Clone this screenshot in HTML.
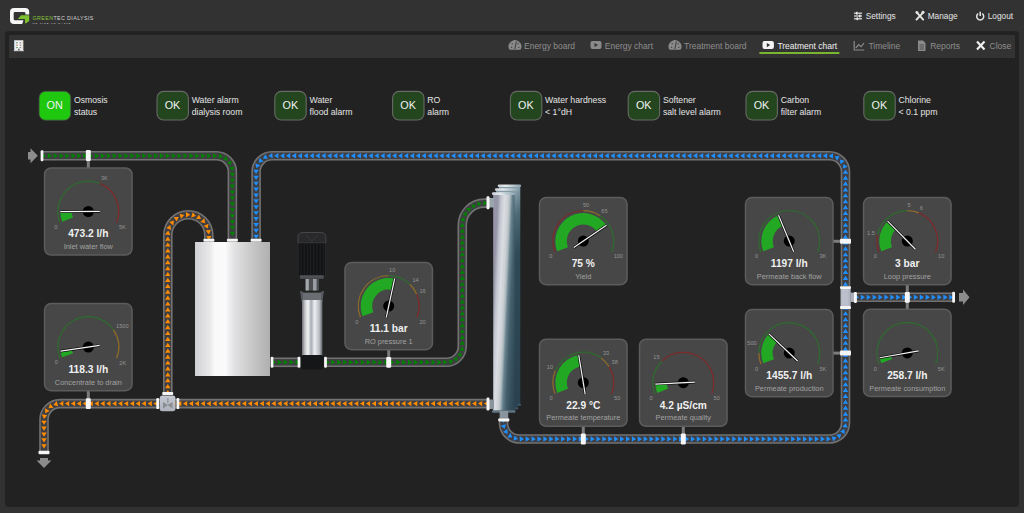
<!DOCTYPE html>
<html><head><meta charset="utf-8"><title>Treatment chart</title>
<style>
*{margin:0;padding:0}
html,body{width:1024px;height:513px;overflow:hidden;background:#323232}
svg{position:absolute;left:0;top:0;display:block}
</style></head><body>
<svg width="1024" height="513" viewBox="0 0 1024 513" font-family='"Liberation Sans", sans-serif'>

<path d="M14,8 H25.2 Q29.2,8 29.2,12 V14.5 H25.4 V13.2 Q25.4,12 24.2,12 H14.9 Q13.7,12 13.7,13.2 V19 Q13.7,20.2 14.9,20.2 H23.5 L22.2,24.1 H14 Q10,24.1 10,20.1 V12 Q10,8 14,8 Z" fill="#f6f6f6"/>
<polygon points="17.9,19 21,15.2 29.2,15.2 29.2,21 25.2,23.8 24.8,19" fill="#7cc12e"/>
<text x="32.6" y="19.7" font-size="5.3" letter-spacing="0.4" fill="#d4d4d4"><tspan fill="#86c23a">GREEN</tspan>TEC DIALYSIS</text>
<text x="32.6" y="24.4" font-size="2.5" letter-spacing="0.92" fill="#d6d6d6">NO TIME TO WASTE</text>
<g fill="#e6e6e6"><rect x="854" y="12.6" width="8" height="1.2"/><rect x="854" y="15.4" width="8" height="1.2"/><rect x="854" y="18.2" width="8" height="1.2"/>
<rect x="856" y="11.8" width="1.6" height="2.8"/><rect x="859" y="14.6" width="1.6" height="2.8"/><rect x="856.5" y="17.4" width="1.6" height="2.8"/></g>
<g stroke="#e6e6e6" stroke-width="1.9" stroke-linecap="round"><line x1="916.5" y1="12.2" x2="923.2" y2="19.6"/><line x1="923.5" y1="12.2" x2="916.5" y2="19.6"/></g>
<g fill="#e6e6e6"><circle cx="917" cy="12.6" r="1.4"/><rect x="921.6" y="11" width="2.6" height="2.6" transform="rotate(45 922.9 12.3)"/></g>
<path d="M978.2,13.6 A3.5,3.5 0 1 0 982.2,13.6" fill="none" stroke="#e6e6e6" stroke-width="1.5"/><line x1="980.2" y1="11.8" x2="980.2" y2="16" stroke="#e6e6e6" stroke-width="1.5"/>
<text x="865.7" y="18.6" font-size="8.3" fill="#e4e4e4">Settings</text>
<text x="927.7" y="18.6" font-size="8.3" fill="#e4e4e4">Manage</text>
<text x="987.7" y="18.6" font-size="8.3" fill="#e4e4e4">Logout</text>

<rect x="5" y="31" width="1014" height="476" rx="4" fill="#222222"/>
<rect x="9" y="35" width="1006" height="23" fill="#333333"/>
<g><rect x="14.4" y="40.3" width="8.8" height="10.4" fill="#f4f4f4"/><rect x="14.4" y="40.3" width="0.9" height="10.4" fill="#c8dcf0"/><rect x="22.4" y="40.3" width="0.8" height="10.4" fill="#e8d8c8"/>
<rect x="13.8" y="50.3" width="10" height="0.9" fill="#d8d8d8"/>
<rect x="16.2" y="42.2" width="1.5" height="1.2" fill="#5e8a66"/><rect x="19.6" y="42.2" width="1.6" height="1.2" fill="#8a8a8a"/>
<rect x="16.2" y="44.6" width="1.5" height="1.2" fill="#b08060"/><rect x="19.6" y="44.6" width="1.6" height="1.2" fill="#8a8a8a"/>
<rect x="16.2" y="47" width="1.5" height="1.2" fill="#5e8a66"/><rect x="19.6" y="47" width="1.6" height="1.2" fill="#8a8a8a"/>
<rect x="18.1" y="48.8" width="1.6" height="1.6" fill="#606060"/></g>
<g fill="#8a8a8a">
<path d="M509.5,49.8 A6.4,6.4 0 1 1 520.5,49.8 Z"/><path d="M669.5,49.8 A6.4,6.4 0 1 1 680.5,49.8 Z"/>
<rect x="590.5" y="41" width="11" height="8" rx="2"/>
</g>
<g fill="#333"><polygon points="594.5,43 594.5,47 598,45"/></g>
<g fill="#444"><rect x="511.6" y="43.2" width="1.2" height="1.2"/><rect x="517.6" y="43.2" width="1.2" height="1.2"/><rect x="511" y="46.8" width="1.2" height="1.2"/><rect x="518.2" y="46.8" width="1.2" height="1.2"/>
<rect x="671.6" y="43.2" width="1.2" height="1.2"/><rect x="677.6" y="43.2" width="1.2" height="1.2"/><rect x="671" y="46.8" width="1.2" height="1.2"/><rect x="678.2" y="46.8" width="1.2" height="1.2"/></g>
<g stroke="#3a3a3a" stroke-width="1"><line x1="514.8" y1="49" x2="516.4" y2="41.5"/><line x1="674.8" y1="49" x2="676.4" y2="41.5"/></g>
<rect x="762.5" y="41.1" width="11.4" height="7.9" rx="2" fill="#f4f4f4"/><polygon points="766.8,43 766.8,47.2 770.2,45.1" fill="#333"/>
<g stroke="#8a8a8a" stroke-width="1.2" fill="none"><polyline points="854.2,41 854.2,50 864.2,50"/><polyline points="855.8,48 858.6,44.6 861,46.6 864,43.2"/></g>
<path d="M918,40.5 H923 L925.5,43 V51 H918 Z" fill="#8a8a8a"/><g stroke="#333" stroke-width="0.7"><line x1="919.5" y1="45" x2="924" y2="45"/><line x1="919.5" y1="47" x2="924" y2="47"/><line x1="919.5" y1="49" x2="924" y2="49"/></g>
<g stroke="#f2f2f2" stroke-width="2.1"><line x1="977" y1="41.6" x2="984.5" y2="49.4"/><line x1="984.5" y1="41.6" x2="977" y2="49.4"/></g>
<g font-size="8.5" fill="#8e8e8e">
<text x="524" y="48.6">Energy board</text>
<text x="604.8" y="48.6">Energy chart</text>
<text x="684" y="48.6">Treatment board</text>
<text x="777.4" y="48.6" fill="#f0f0f0">Treatment chart</text>
<text x="868.4" y="48.6">Timeline</text>
<text x="930.2" y="48.6">Reports</text>
<text x="989.6" y="48.6">Close</text>
</g>
<rect x="759.4" y="52" width="80" height="2" fill="#7ab52f"/>
<rect x="39.1" y="91.3" width="31.6" height="28.9" rx="6.5" fill="#1fc80f" stroke="#4a4f4a" stroke-width="0.8"/><text x="54.7" y="108.8" text-anchor="middle" font-size="10.8" fill="#f2f2f2">ON</text><text x="73.9" y="102.8" font-size="8.7" fill="#e4e4e4">Osmosis</text><text x="73.9" y="115" font-size="8.7" fill="#e4e4e4">status</text><rect x="157" y="91.4" width="31.4" height="28.6" rx="6.5" fill="#23461f" stroke="#676a64" stroke-width="1.1"/><text x="172.5" y="108.8" text-anchor="middle" font-size="10.8" fill="#f2f2f2">OK</text><text x="191.7" y="102.8" font-size="8.7" fill="#e4e4e4">Water alarm</text><text x="191.7" y="115" font-size="8.7" fill="#e4e4e4">dialysis room</text><rect x="274.8" y="91.4" width="31.4" height="28.6" rx="6.5" fill="#23461f" stroke="#676a64" stroke-width="1.1"/><text x="290.3" y="108.8" text-anchor="middle" font-size="10.8" fill="#f2f2f2">OK</text><text x="309.5" y="102.8" font-size="8.7" fill="#e4e4e4">Water</text><text x="309.5" y="115" font-size="8.7" fill="#e4e4e4">flood alarm</text><rect x="392.6" y="91.4" width="31.4" height="28.6" rx="6.5" fill="#23461f" stroke="#676a64" stroke-width="1.1"/><text x="408.1" y="108.8" text-anchor="middle" font-size="10.8" fill="#f2f2f2">OK</text><text x="427.3" y="102.8" font-size="8.7" fill="#e4e4e4">RO</text><text x="427.3" y="115" font-size="8.7" fill="#e4e4e4">alarm</text><rect x="510.4" y="91.4" width="31.4" height="28.6" rx="6.5" fill="#23461f" stroke="#676a64" stroke-width="1.1"/><text x="525.9" y="108.8" text-anchor="middle" font-size="10.8" fill="#f2f2f2">OK</text><text x="545.1" y="102.8" font-size="8.7" fill="#e4e4e4">Water hardness</text><text x="545.1" y="115" font-size="8.7" fill="#e4e4e4">&lt; 1°dH</text><rect x="628.2" y="91.4" width="31.4" height="28.6" rx="6.5" fill="#23461f" stroke="#676a64" stroke-width="1.1"/><text x="643.7" y="108.8" text-anchor="middle" font-size="10.8" fill="#f2f2f2">OK</text><text x="662.9" y="102.8" font-size="8.7" fill="#e4e4e4">Softener</text><text x="662.9" y="115" font-size="8.7" fill="#e4e4e4">salt level alarm</text><rect x="746" y="91.4" width="31.4" height="28.6" rx="6.5" fill="#23461f" stroke="#676a64" stroke-width="1.1"/><text x="761.5" y="108.8" text-anchor="middle" font-size="10.8" fill="#f2f2f2">OK</text><text x="780.7" y="102.8" font-size="8.7" fill="#e4e4e4">Carbon</text><text x="780.7" y="115" font-size="8.7" fill="#e4e4e4">filter alarm</text><rect x="863.8" y="91.4" width="31.4" height="28.6" rx="6.5" fill="#23461f" stroke="#676a64" stroke-width="1.1"/><text x="879.3" y="108.8" text-anchor="middle" font-size="10.8" fill="#f2f2f2">OK</text><text x="898.5" y="102.8" font-size="8.7" fill="#e4e4e4">Chlorine</text><text x="898.5" y="115" font-size="8.7" fill="#e4e4e4">&lt; 0.1 ppm</text><defs><linearGradient id="tg" x1="0" x2="1" y1="0" y2="0"><stop offset="0" stop-color="#cfd0d4"/><stop offset="0.2" stop-color="#e9e9ea"/><stop offset="0.26" stop-color="#f9f9f9"/><stop offset="0.4" stop-color="#fbfbfb"/><stop offset="0.46" stop-color="#eeeef0"/><stop offset="0.52" stop-color="#e2e2e4"/><stop offset="0.62" stop-color="#d7d7d7"/><stop offset="0.74" stop-color="#cacaca"/><stop offset="0.86" stop-color="#bdbdbd"/><stop offset="1" stop-color="#b0b0b0"/></linearGradient><linearGradient id="mg" gradientUnits="userSpaceOnUse" x1="493" y1="302" x2="520" y2="303.26"><stop offset="0" stop-color="#9696a8"/><stop offset="0.12" stop-color="#c4c6d0"/><stop offset="0.25" stop-color="#dadde2"/><stop offset="0.38" stop-color="#cbd0d4"/><stop offset="0.46" stop-color="#a9b6bc"/><stop offset="0.53" stop-color="#6a8590"/><stop offset="0.66" stop-color="#45606c"/><stop offset="0.82" stop-color="#34505c"/><stop offset="1" stop-color="#2c4250"/></linearGradient><linearGradient id="mgb" x1="0" x2="0" y1="0" y2="1"><stop offset="0" stop-color="#8aa2ac"/><stop offset="0.12" stop-color="#4e6a76"/><stop offset="0.3" stop-color="#304a58"/><stop offset="1" stop-color="#2a4150"/></linearGradient><linearGradient id="fg" x1="0" x2="1" y1="0" y2="0"><stop offset="0" stop-color="#c8ced4"/><stop offset="0.35" stop-color="#e6eaec"/><stop offset="0.7" stop-color="#b4c4cc"/><stop offset="1" stop-color="#8aa2ae"/></linearGradient><linearGradient id="pg" x1="0" x2="1" y1="0" y2="0"><stop offset="0" stop-color="#6f7176"/><stop offset="0.15" stop-color="#c8cacd"/><stop offset="0.3" stop-color="#f2f3f4"/><stop offset="0.45" stop-color="#a9aeb4"/><stop offset="0.62" stop-color="#eef0f2"/><stop offset="0.85" stop-color="#b8bbbf"/><stop offset="1" stop-color="#606368"/></linearGradient><linearGradient id="vg" x1="0" x2="0" y1="0" y2="1"><stop offset="0" stop-color="#c4c8d2"/><stop offset="1" stop-color="#aeb2bc"/></linearGradient></defs><line x1="88.3" y1="156" x2="88.3" y2="168" stroke="#7c7c7c" stroke-width="3"/><line x1="88.3" y1="390" x2="88.3" y2="404" stroke="#7c7c7c" stroke-width="3"/><line x1="388.7" y1="349" x2="388.7" y2="362" stroke="#7c7c7c" stroke-width="3"/><line x1="583.3" y1="425" x2="583.3" y2="439" stroke="#7c7c7c" stroke-width="3"/><line x1="683.3" y1="425" x2="683.3" y2="439" stroke="#7c7c7c" stroke-width="3"/><line x1="833" y1="241.3" x2="846" y2="241.3" stroke="#7c7c7c" stroke-width="3"/><line x1="833" y1="353.1" x2="846" y2="353.1" stroke="#7c7c7c" stroke-width="3"/><line x1="907.3" y1="284" x2="907.3" y2="310" stroke="#7c7c7c" stroke-width="3"/><path d="M42,155.8 H216.4 A16,16 0 0 1 232.4,171.8 V240" fill="none" stroke="#727272" stroke-width="9.6"/><path d="M42,155.8 H216.4 A16,16 0 0 1 232.4,171.8 V240" fill="none" stroke="#3f3e42" stroke-width="6.4"/><g fill="#008000"><polygon points="46.1,155.8 41.9,153.1 41.9,158.5"/><polygon points="52,155.8 47.8,153.1 47.8,158.5"/><polygon points="57.9,155.8 53.7,153.1 53.7,158.5"/><polygon points="63.8,155.8 59.6,153.1 59.6,158.5"/><polygon points="69.7,155.8 65.5,153.1 65.5,158.5"/><polygon points="75.6,155.8 71.4,153.1 71.4,158.5"/><polygon points="81.5,155.8 77.3,153.1 77.3,158.5"/><polygon points="87.4,155.8 83.2,153.1 83.2,158.5"/><polygon points="93.3,155.8 89.1,153.1 89.1,158.5"/><polygon points="99.2,155.8 95,153.1 95,158.5"/><polygon points="105.1,155.8 100.9,153.1 100.9,158.5"/><polygon points="111,155.8 106.8,153.1 106.8,158.5"/><polygon points="116.9,155.8 112.7,153.1 112.7,158.5"/><polygon points="122.8,155.8 118.6,153.1 118.6,158.5"/><polygon points="128.7,155.8 124.5,153.1 124.5,158.5"/><polygon points="134.6,155.8 130.4,153.1 130.4,158.5"/><polygon points="140.5,155.8 136.3,153.1 136.3,158.5"/><polygon points="146.4,155.8 142.2,153.1 142.2,158.5"/><polygon points="152.3,155.8 148.1,153.1 148.1,158.5"/><polygon points="158.2,155.8 154,153.1 154,158.5"/><polygon points="164.1,155.8 159.9,153.1 159.9,158.5"/><polygon points="170,155.8 165.8,153.1 165.8,158.5"/><polygon points="175.9,155.8 171.7,153.1 171.7,158.5"/><polygon points="181.8,155.8 177.6,153.1 177.6,158.5"/><polygon points="187.7,155.8 183.5,153.1 183.5,158.5"/><polygon points="193.6,155.8 189.4,153.1 189.4,158.5"/><polygon points="199.5,155.8 195.3,153.1 195.3,158.5"/><polygon points="205.4,155.8 201.2,153.1 201.2,158.5"/><polygon points="211.3,155.8 207.1,153.1 207.1,158.5"/><polygon points="217.2,155.8 213,153.1 213,158.5"/><polygon points="222.95,157.05 219.69,153.27 218.16,158.45"/><polygon points="227.83,160.4 226.15,155.7 222.85,159.98"/><polygon points="231.17,165.29 231.29,160.3 226.68,163.1"/><polygon points="232.52,171.05 234.44,166.44 229.12,167.39"/><polygon points="232.4,176.97 235.1,172.77 229.7,172.77"/><polygon points="232.4,182.87 235.1,178.67 229.7,178.67"/><polygon points="232.4,188.77 235.1,184.57 229.7,184.57"/><polygon points="232.4,194.67 235.1,190.47 229.7,190.47"/><polygon points="232.4,200.57 235.1,196.37 229.7,196.37"/><polygon points="232.4,206.47 235.1,202.27 229.7,202.27"/><polygon points="232.4,212.37 235.1,208.17 229.7,208.17"/><polygon points="232.4,218.27 235.1,214.07 229.7,214.07"/><polygon points="232.4,224.17 235.1,219.97 229.7,219.97"/><polygon points="232.4,230.07 235.1,225.87 229.7,225.87"/><polygon points="232.4,235.97 235.1,231.77 229.7,231.77"/></g><path d="M503.5,419 V423 A16,16 0 0 0 519.5,439 H829.5 A16,16 0 0 0 845.5,423 V171.8 A16,16 0 0 0 829.5,155.8 H272.1 A16,16 0 0 0 256.1,171.8 V240" fill="none" stroke="#727272" stroke-width="9.6"/><path d="M503.5,419 V423 A16,16 0 0 0 519.5,439 H829.5 A16,16 0 0 0 845.5,423 V171.8 A16,16 0 0 0 829.5,155.8 H272.1 A16,16 0 0 0 256.1,171.8 V240" fill="none" stroke="#3f3e42" stroke-width="6.4"/><g fill="#1e90ff"><polygon points="503.5,423.1 506.2,418.9 500.8,418.9"/><polygon points="504.48,428.9 506.09,424.17 500.85,425.48"/><polygon points="507.62,433.92 507.41,428.93 502.99,432.03"/><polygon points="512.35,437.47 510.36,432.89 507.36,437.38"/><polygon points="518.04,439.07 514.54,435.52 513.36,440.79"/><polygon points="523.97,439 519.77,436.3 519.77,441.7"/><polygon points="529.87,439 525.67,436.3 525.67,441.7"/><polygon points="535.77,439 531.57,436.3 531.57,441.7"/><polygon points="541.67,439 537.47,436.3 537.47,441.7"/><polygon points="547.57,439 543.37,436.3 543.37,441.7"/><polygon points="553.47,439 549.27,436.3 549.27,441.7"/><polygon points="559.37,439 555.17,436.3 555.17,441.7"/><polygon points="565.27,439 561.07,436.3 561.07,441.7"/><polygon points="571.17,439 566.97,436.3 566.97,441.7"/><polygon points="577.07,439 572.87,436.3 572.87,441.7"/><polygon points="582.97,439 578.77,436.3 578.77,441.7"/><polygon points="588.87,439 584.67,436.3 584.67,441.7"/><polygon points="594.77,439 590.57,436.3 590.57,441.7"/><polygon points="600.67,439 596.47,436.3 596.47,441.7"/><polygon points="606.57,439 602.37,436.3 602.37,441.7"/><polygon points="612.47,439 608.27,436.3 608.27,441.7"/><polygon points="618.37,439 614.17,436.3 614.17,441.7"/><polygon points="624.27,439 620.07,436.3 620.07,441.7"/><polygon points="630.17,439 625.97,436.3 625.97,441.7"/><polygon points="636.07,439 631.87,436.3 631.87,441.7"/><polygon points="641.97,439 637.77,436.3 637.77,441.7"/><polygon points="647.87,439 643.67,436.3 643.67,441.7"/><polygon points="653.77,439 649.57,436.3 649.57,441.7"/><polygon points="659.67,439 655.47,436.3 655.47,441.7"/><polygon points="665.57,439 661.37,436.3 661.37,441.7"/><polygon points="671.47,439 667.27,436.3 667.27,441.7"/><polygon points="677.37,439 673.17,436.3 673.17,441.7"/><polygon points="683.27,439 679.07,436.3 679.07,441.7"/><polygon points="689.17,439 684.97,436.3 684.97,441.7"/><polygon points="695.07,439 690.87,436.3 690.87,441.7"/><polygon points="700.97,439 696.77,436.3 696.77,441.7"/><polygon points="706.87,439 702.67,436.3 702.67,441.7"/><polygon points="712.77,439 708.57,436.3 708.57,441.7"/><polygon points="718.67,439 714.47,436.3 714.47,441.7"/><polygon points="724.57,439 720.37,436.3 720.37,441.7"/><polygon points="730.47,439 726.27,436.3 726.27,441.7"/><polygon points="736.37,439 732.17,436.3 732.17,441.7"/><polygon points="742.27,439 738.07,436.3 738.07,441.7"/><polygon points="748.17,439 743.97,436.3 743.97,441.7"/><polygon points="754.07,439 749.87,436.3 749.87,441.7"/><polygon points="759.97,439 755.77,436.3 755.77,441.7"/><polygon points="765.87,439 761.67,436.3 761.67,441.7"/><polygon points="771.77,439 767.57,436.3 767.57,441.7"/><polygon points="777.67,439 773.47,436.3 773.47,441.7"/><polygon points="783.57,439 779.37,436.3 779.37,441.7"/><polygon points="789.47,439 785.27,436.3 785.27,441.7"/><polygon points="795.37,439 791.17,436.3 791.17,441.7"/><polygon points="801.27,439 797.07,436.3 797.07,441.7"/><polygon points="807.17,439 802.97,436.3 802.97,441.7"/><polygon points="813.07,439 808.87,436.3 808.87,441.7"/><polygon points="818.97,439 814.77,436.3 814.77,441.7"/><polygon points="824.87,439 820.67,436.3 820.67,441.7"/><polygon points="830.77,439 826.57,436.3 826.57,441.7"/><polygon points="836.48,437.55 831.65,436.29 833.33,441.42"/><polygon points="841.25,434.06 836.29,434.63 839.71,438.81"/><polygon points="844.45,429.08 840.03,431.4 844.72,434.06"/><polygon points="845.63,423.28 842.35,427.04 847.69,427.83"/><polygon points="845.5,417.37 842.8,421.57 848.2,421.57"/><polygon points="845.5,411.47 842.8,415.67 848.2,415.67"/><polygon points="845.5,405.57 842.8,409.77 848.2,409.77"/><polygon points="845.5,399.67 842.8,403.87 848.2,403.87"/><polygon points="845.5,393.77 842.8,397.97 848.2,397.97"/><polygon points="845.5,387.87 842.8,392.07 848.2,392.07"/><polygon points="845.5,381.97 842.8,386.17 848.2,386.17"/><polygon points="845.5,376.07 842.8,380.27 848.2,380.27"/><polygon points="845.5,370.17 842.8,374.37 848.2,374.37"/><polygon points="845.5,364.27 842.8,368.47 848.2,368.47"/><polygon points="845.5,358.37 842.8,362.57 848.2,362.57"/><polygon points="845.5,352.47 842.8,356.67 848.2,356.67"/><polygon points="845.5,346.57 842.8,350.77 848.2,350.77"/><polygon points="845.5,340.67 842.8,344.87 848.2,344.87"/><polygon points="845.5,334.77 842.8,338.97 848.2,338.97"/><polygon points="845.5,328.87 842.8,333.07 848.2,333.07"/><polygon points="845.5,322.97 842.8,327.17 848.2,327.17"/><polygon points="845.5,317.07 842.8,321.27 848.2,321.27"/><polygon points="845.5,311.17 842.8,315.37 848.2,315.37"/><polygon points="845.5,305.27 842.8,309.47 848.2,309.47"/><polygon points="845.5,299.37 842.8,303.57 848.2,303.57"/><polygon points="845.5,293.47 842.8,297.67 848.2,297.67"/><polygon points="845.5,287.57 842.8,291.77 848.2,291.77"/><polygon points="845.5,281.67 842.8,285.87 848.2,285.87"/><polygon points="845.5,275.77 842.8,279.97 848.2,279.97"/><polygon points="845.5,269.87 842.8,274.07 848.2,274.07"/><polygon points="845.5,263.97 842.8,268.17 848.2,268.17"/><polygon points="845.5,258.07 842.8,262.27 848.2,262.27"/><polygon points="845.5,252.17 842.8,256.37 848.2,256.37"/><polygon points="845.5,246.27 842.8,250.47 848.2,250.47"/><polygon points="845.5,240.37 842.8,244.57 848.2,244.57"/><polygon points="845.5,234.47 842.8,238.67 848.2,238.67"/><polygon points="845.5,228.57 842.8,232.77 848.2,232.77"/><polygon points="845.5,222.67 842.8,226.87 848.2,226.87"/><polygon points="845.5,216.77 842.8,220.97 848.2,220.97"/><polygon points="845.5,210.87 842.8,215.07 848.2,215.07"/><polygon points="845.5,204.97 842.8,209.17 848.2,209.17"/><polygon points="845.5,199.07 842.8,203.27 848.2,203.27"/><polygon points="845.5,193.17 842.8,197.37 848.2,197.37"/><polygon points="845.5,187.27 842.8,191.47 848.2,191.47"/><polygon points="845.5,181.37 842.8,185.57 848.2,185.57"/><polygon points="845.5,175.47 842.8,179.67 848.2,179.67"/><polygon points="845.48,169.57 842.82,173.79 848.22,173.74"/><polygon points="843.6,163.96 842.64,168.85 847.66,166.87"/><polygon points="839.83,159.4 840.69,164.32 844.66,160.65"/><polygon points="834.66,156.51 837.24,160.78 839.62,155.94"/><polygon points="828.8,155.68 832.75,158.73 833.22,153.35"/><polygon points="822.9,155.8 827.1,158.5 827.1,153.1"/><polygon points="817,155.8 821.2,158.5 821.2,153.1"/><polygon points="811.1,155.8 815.3,158.5 815.3,153.1"/><polygon points="805.2,155.8 809.4,158.5 809.4,153.1"/><polygon points="799.3,155.8 803.5,158.5 803.5,153.1"/><polygon points="793.4,155.8 797.6,158.5 797.6,153.1"/><polygon points="787.5,155.8 791.7,158.5 791.7,153.1"/><polygon points="781.6,155.8 785.8,158.5 785.8,153.1"/><polygon points="775.7,155.8 779.9,158.5 779.9,153.1"/><polygon points="769.8,155.8 774,158.5 774,153.1"/><polygon points="763.9,155.8 768.1,158.5 768.1,153.1"/><polygon points="758,155.8 762.2,158.5 762.2,153.1"/><polygon points="752.1,155.8 756.3,158.5 756.3,153.1"/><polygon points="746.2,155.8 750.4,158.5 750.4,153.1"/><polygon points="740.3,155.8 744.5,158.5 744.5,153.1"/><polygon points="734.4,155.8 738.6,158.5 738.6,153.1"/><polygon points="728.5,155.8 732.7,158.5 732.7,153.1"/><polygon points="722.6,155.8 726.8,158.5 726.8,153.1"/><polygon points="716.7,155.8 720.9,158.5 720.9,153.1"/><polygon points="710.8,155.8 715,158.5 715,153.1"/><polygon points="704.9,155.8 709.1,158.5 709.1,153.1"/><polygon points="699,155.8 703.2,158.5 703.2,153.1"/><polygon points="693.1,155.8 697.3,158.5 697.3,153.1"/><polygon points="687.2,155.8 691.4,158.5 691.4,153.1"/><polygon points="681.3,155.8 685.5,158.5 685.5,153.1"/><polygon points="675.4,155.8 679.6,158.5 679.6,153.1"/><polygon points="669.5,155.8 673.7,158.5 673.7,153.1"/><polygon points="663.6,155.8 667.8,158.5 667.8,153.1"/><polygon points="657.7,155.8 661.9,158.5 661.9,153.1"/><polygon points="651.8,155.8 656,158.5 656,153.1"/><polygon points="645.9,155.8 650.1,158.5 650.1,153.1"/><polygon points="640,155.8 644.2,158.5 644.2,153.1"/><polygon points="634.1,155.8 638.3,158.5 638.3,153.1"/><polygon points="628.2,155.8 632.4,158.5 632.4,153.1"/><polygon points="622.3,155.8 626.5,158.5 626.5,153.1"/><polygon points="616.4,155.8 620.6,158.5 620.6,153.1"/><polygon points="610.5,155.8 614.7,158.5 614.7,153.1"/><polygon points="604.6,155.8 608.8,158.5 608.8,153.1"/><polygon points="598.7,155.8 602.9,158.5 602.9,153.1"/><polygon points="592.8,155.8 597,158.5 597,153.1"/><polygon points="586.9,155.8 591.1,158.5 591.1,153.1"/><polygon points="581,155.8 585.2,158.5 585.2,153.1"/><polygon points="575.1,155.8 579.3,158.5 579.3,153.1"/><polygon points="569.2,155.8 573.4,158.5 573.4,153.1"/><polygon points="563.3,155.8 567.5,158.5 567.5,153.1"/><polygon points="557.4,155.8 561.6,158.5 561.6,153.1"/><polygon points="551.5,155.8 555.7,158.5 555.7,153.1"/><polygon points="545.6,155.8 549.8,158.5 549.8,153.1"/><polygon points="539.7,155.8 543.9,158.5 543.9,153.1"/><polygon points="533.8,155.8 538,158.5 538,153.1"/><polygon points="527.9,155.8 532.1,158.5 532.1,153.1"/><polygon points="522,155.8 526.2,158.5 526.2,153.1"/><polygon points="516.1,155.8 520.3,158.5 520.3,153.1"/><polygon points="510.2,155.8 514.4,158.5 514.4,153.1"/><polygon points="504.3,155.8 508.5,158.5 508.5,153.1"/><polygon points="498.4,155.8 502.6,158.5 502.6,153.1"/><polygon points="492.5,155.8 496.7,158.5 496.7,153.1"/><polygon points="486.6,155.8 490.8,158.5 490.8,153.1"/><polygon points="480.7,155.8 484.9,158.5 484.9,153.1"/><polygon points="474.8,155.8 479,158.5 479,153.1"/><polygon points="468.9,155.8 473.1,158.5 473.1,153.1"/><polygon points="463,155.8 467.2,158.5 467.2,153.1"/><polygon points="457.1,155.8 461.3,158.5 461.3,153.1"/><polygon points="451.2,155.8 455.4,158.5 455.4,153.1"/><polygon points="445.3,155.8 449.5,158.5 449.5,153.1"/><polygon points="439.4,155.8 443.6,158.5 443.6,153.1"/><polygon points="433.5,155.8 437.7,158.5 437.7,153.1"/><polygon points="427.6,155.8 431.8,158.5 431.8,153.1"/><polygon points="421.7,155.8 425.9,158.5 425.9,153.1"/><polygon points="415.8,155.8 420,158.5 420,153.1"/><polygon points="409.9,155.8 414.1,158.5 414.1,153.1"/><polygon points="404,155.8 408.2,158.5 408.2,153.1"/><polygon points="398.1,155.8 402.3,158.5 402.3,153.1"/><polygon points="392.2,155.8 396.4,158.5 396.4,153.1"/><polygon points="386.3,155.8 390.5,158.5 390.5,153.1"/><polygon points="380.4,155.8 384.6,158.5 384.6,153.1"/><polygon points="374.5,155.8 378.7,158.5 378.7,153.1"/><polygon points="368.6,155.8 372.8,158.5 372.8,153.1"/><polygon points="362.7,155.8 366.9,158.5 366.9,153.1"/><polygon points="356.8,155.8 361,158.5 361,153.1"/><polygon points="350.9,155.8 355.1,158.5 355.1,153.1"/><polygon points="345,155.8 349.2,158.5 349.2,153.1"/><polygon points="339.1,155.8 343.3,158.5 343.3,153.1"/><polygon points="333.2,155.8 337.4,158.5 337.4,153.1"/><polygon points="327.3,155.8 331.5,158.5 331.5,153.1"/><polygon points="321.4,155.8 325.6,158.5 325.6,153.1"/><polygon points="315.5,155.8 319.7,158.5 319.7,153.1"/><polygon points="309.6,155.8 313.8,158.5 313.8,153.1"/><polygon points="303.7,155.8 307.9,158.5 307.9,153.1"/><polygon points="297.8,155.8 302,158.5 302,153.1"/><polygon points="291.9,155.8 296.1,158.5 296.1,153.1"/><polygon points="286,155.8 290.2,158.5 290.2,153.1"/><polygon points="280.1,155.8 284.3,158.5 284.3,153.1"/><polygon points="274.2,155.8 278.4,158.5 278.4,153.1"/><polygon points="268.31,156.11 272.78,158.35 272.2,152.98"/><polygon points="262.91,158.53 267.88,159.01 265.41,154.21"/><polygon points="258.75,162.74 263.56,161.39 259.52,157.8"/><polygon points="256.38,168.16 260.38,165.17 255.32,163.28"/><polygon points="256.1,174.07 258.8,169.87 253.4,169.87"/><polygon points="256.1,179.97 258.8,175.77 253.4,175.77"/><polygon points="256.1,185.87 258.8,181.67 253.4,181.67"/><polygon points="256.1,191.77 258.8,187.57 253.4,187.57"/><polygon points="256.1,197.67 258.8,193.47 253.4,193.47"/><polygon points="256.1,203.57 258.8,199.37 253.4,199.37"/><polygon points="256.1,209.47 258.8,205.27 253.4,205.27"/><polygon points="256.1,215.37 258.8,211.17 253.4,211.17"/><polygon points="256.1,221.27 258.8,217.07 253.4,217.07"/><polygon points="256.1,227.17 258.8,222.97 253.4,222.97"/><polygon points="256.1,233.07 258.8,228.87 253.4,228.87"/><polygon points="256.1,238.97 258.8,234.77 253.4,234.77"/></g><path d="M855,297.3 H953.6" fill="none" stroke="#727272" stroke-width="9.6"/><path d="M855,297.3 H953.6" fill="none" stroke="#3f3e42" stroke-width="6.4"/><g fill="#1e90ff"><polygon points="859.1,297.3 854.9,294.6 854.9,300"/><polygon points="865,297.3 860.8,294.6 860.8,300"/><polygon points="870.9,297.3 866.7,294.6 866.7,300"/><polygon points="876.8,297.3 872.6,294.6 872.6,300"/><polygon points="882.7,297.3 878.5,294.6 878.5,300"/><polygon points="888.6,297.3 884.4,294.6 884.4,300"/><polygon points="894.5,297.3 890.3,294.6 890.3,300"/><polygon points="900.4,297.3 896.2,294.6 896.2,300"/><polygon points="906.3,297.3 902.1,294.6 902.1,300"/><polygon points="912.2,297.3 908,294.6 908,300"/><polygon points="918.1,297.3 913.9,294.6 913.9,300"/><polygon points="924,297.3 919.8,294.6 919.8,300"/><polygon points="929.9,297.3 925.7,294.6 925.7,300"/><polygon points="935.8,297.3 931.6,294.6 931.6,300"/><polygon points="941.7,297.3 937.5,294.6 937.5,300"/><polygon points="947.6,297.3 943.4,294.6 943.4,300"/><polygon points="953.5,297.3 949.3,294.6 949.3,300"/></g><path d="M488,403.6 H60 A16,16 0 0 0 44,419.6 V452.5" fill="none" stroke="#727272" stroke-width="9.6"/><path d="M488,403.6 H60 A16,16 0 0 0 44,419.6 V452.5" fill="none" stroke="#3f3e42" stroke-width="6.4"/><g fill="#ff8c00"><polygon points="483.9,403.6 488.1,406.3 488.1,400.9"/><polygon points="478,403.6 482.2,406.3 482.2,400.9"/><polygon points="472.1,403.6 476.3,406.3 476.3,400.9"/><polygon points="466.2,403.6 470.4,406.3 470.4,400.9"/><polygon points="460.3,403.6 464.5,406.3 464.5,400.9"/><polygon points="454.4,403.6 458.6,406.3 458.6,400.9"/><polygon points="448.5,403.6 452.7,406.3 452.7,400.9"/><polygon points="442.6,403.6 446.8,406.3 446.8,400.9"/><polygon points="436.7,403.6 440.9,406.3 440.9,400.9"/><polygon points="430.8,403.6 435,406.3 435,400.9"/><polygon points="424.9,403.6 429.1,406.3 429.1,400.9"/><polygon points="419,403.6 423.2,406.3 423.2,400.9"/><polygon points="413.1,403.6 417.3,406.3 417.3,400.9"/><polygon points="407.2,403.6 411.4,406.3 411.4,400.9"/><polygon points="401.3,403.6 405.5,406.3 405.5,400.9"/><polygon points="395.4,403.6 399.6,406.3 399.6,400.9"/><polygon points="389.5,403.6 393.7,406.3 393.7,400.9"/><polygon points="383.6,403.6 387.8,406.3 387.8,400.9"/><polygon points="377.7,403.6 381.9,406.3 381.9,400.9"/><polygon points="371.8,403.6 376,406.3 376,400.9"/><polygon points="365.9,403.6 370.1,406.3 370.1,400.9"/><polygon points="360,403.6 364.2,406.3 364.2,400.9"/><polygon points="354.1,403.6 358.3,406.3 358.3,400.9"/><polygon points="348.2,403.6 352.4,406.3 352.4,400.9"/><polygon points="342.3,403.6 346.5,406.3 346.5,400.9"/><polygon points="336.4,403.6 340.6,406.3 340.6,400.9"/><polygon points="330.5,403.6 334.7,406.3 334.7,400.9"/><polygon points="324.6,403.6 328.8,406.3 328.8,400.9"/><polygon points="318.7,403.6 322.9,406.3 322.9,400.9"/><polygon points="312.8,403.6 317,406.3 317,400.9"/><polygon points="306.9,403.6 311.1,406.3 311.1,400.9"/><polygon points="301,403.6 305.2,406.3 305.2,400.9"/><polygon points="295.1,403.6 299.3,406.3 299.3,400.9"/><polygon points="289.2,403.6 293.4,406.3 293.4,400.9"/><polygon points="283.3,403.6 287.5,406.3 287.5,400.9"/><polygon points="277.4,403.6 281.6,406.3 281.6,400.9"/><polygon points="271.5,403.6 275.7,406.3 275.7,400.9"/><polygon points="265.6,403.6 269.8,406.3 269.8,400.9"/><polygon points="259.7,403.6 263.9,406.3 263.9,400.9"/><polygon points="253.8,403.6 258,406.3 258,400.9"/><polygon points="247.9,403.6 252.1,406.3 252.1,400.9"/><polygon points="242,403.6 246.2,406.3 246.2,400.9"/><polygon points="236.1,403.6 240.3,406.3 240.3,400.9"/><polygon points="230.2,403.6 234.4,406.3 234.4,400.9"/><polygon points="224.3,403.6 228.5,406.3 228.5,400.9"/><polygon points="218.4,403.6 222.6,406.3 222.6,400.9"/><polygon points="212.5,403.6 216.7,406.3 216.7,400.9"/><polygon points="206.6,403.6 210.8,406.3 210.8,400.9"/><polygon points="200.7,403.6 204.9,406.3 204.9,400.9"/><polygon points="194.8,403.6 199,406.3 199,400.9"/><polygon points="188.9,403.6 193.1,406.3 193.1,400.9"/><polygon points="183,403.6 187.2,406.3 187.2,400.9"/><polygon points="177.1,403.6 181.3,406.3 181.3,400.9"/><polygon points="171.2,403.6 175.4,406.3 175.4,400.9"/><polygon points="165.3,403.6 169.5,406.3 169.5,400.9"/><polygon points="159.4,403.6 163.6,406.3 163.6,400.9"/><polygon points="153.5,403.6 157.7,406.3 157.7,400.9"/><polygon points="147.6,403.6 151.8,406.3 151.8,400.9"/><polygon points="141.7,403.6 145.9,406.3 145.9,400.9"/><polygon points="135.8,403.6 140,406.3 140,400.9"/><polygon points="129.9,403.6 134.1,406.3 134.1,400.9"/><polygon points="124,403.6 128.2,406.3 128.2,400.9"/><polygon points="118.1,403.6 122.3,406.3 122.3,400.9"/><polygon points="112.2,403.6 116.4,406.3 116.4,400.9"/><polygon points="106.3,403.6 110.5,406.3 110.5,400.9"/><polygon points="100.4,403.6 104.6,406.3 104.6,400.9"/><polygon points="94.5,403.6 98.7,406.3 98.7,400.9"/><polygon points="88.6,403.6 92.8,406.3 92.8,400.9"/><polygon points="82.7,403.6 86.9,406.3 86.9,400.9"/><polygon points="76.8,403.6 81,406.3 81,400.9"/><polygon points="70.9,403.6 75.1,406.3 75.1,400.9"/><polygon points="65,403.6 69.2,406.3 69.2,400.9"/><polygon points="59.1,403.6 63.3,406.3 63.3,400.9"/><polygon points="53.36,404.89 58.16,406.26 56.6,401.09"/><polygon points="48.5,408.28 53.48,407.82 50.15,403.56"/><polygon points="45.19,413.18 49.67,410.97 45.04,408.19"/><polygon points="43.88,418.95 47.25,415.27 41.93,414.35"/><polygon points="44,424.87 46.7,420.67 41.3,420.67"/><polygon points="44,430.77 46.7,426.57 41.3,426.57"/><polygon points="44,436.67 46.7,432.47 41.3,432.47"/><polygon points="44,442.57 46.7,438.37 41.3,438.37"/><polygon points="44,448.47 46.7,444.27 41.3,444.27"/></g><path d="M167.8,394 V235.2 A20.5,20.5 0 0 1 208.8,235.2 V240" fill="none" stroke="#727272" stroke-width="9.6"/><path d="M167.8,394 V235.2 A20.5,20.5 0 0 1 208.8,235.2 V240" fill="none" stroke="#3f3e42" stroke-width="6.4"/><g fill="#ff8c00"><polygon points="167.8,389.9 165.1,394.1 170.5,394.1"/><polygon points="167.8,384 165.1,388.2 170.5,388.2"/><polygon points="167.8,378.1 165.1,382.3 170.5,382.3"/><polygon points="167.8,372.2 165.1,376.4 170.5,376.4"/><polygon points="167.8,366.3 165.1,370.5 170.5,370.5"/><polygon points="167.8,360.4 165.1,364.6 170.5,364.6"/><polygon points="167.8,354.5 165.1,358.7 170.5,358.7"/><polygon points="167.8,348.6 165.1,352.8 170.5,352.8"/><polygon points="167.8,342.7 165.1,346.9 170.5,346.9"/><polygon points="167.8,336.8 165.1,341 170.5,341"/><polygon points="167.8,330.9 165.1,335.1 170.5,335.1"/><polygon points="167.8,325 165.1,329.2 170.5,329.2"/><polygon points="167.8,319.1 165.1,323.3 170.5,323.3"/><polygon points="167.8,313.2 165.1,317.4 170.5,317.4"/><polygon points="167.8,307.3 165.1,311.5 170.5,311.5"/><polygon points="167.8,301.4 165.1,305.6 170.5,305.6"/><polygon points="167.8,295.5 165.1,299.7 170.5,299.7"/><polygon points="167.8,289.6 165.1,293.8 170.5,293.8"/><polygon points="167.8,283.7 165.1,287.9 170.5,287.9"/><polygon points="167.8,277.8 165.1,282 170.5,282"/><polygon points="167.8,271.9 165.1,276.1 170.5,276.1"/><polygon points="167.8,266 165.1,270.2 170.5,270.2"/><polygon points="167.8,260.1 165.1,264.3 170.5,264.3"/><polygon points="167.8,254.2 165.1,258.4 170.5,258.4"/><polygon points="167.8,248.3 165.1,252.5 170.5,252.5"/><polygon points="167.8,242.4 165.1,246.6 170.5,246.6"/><polygon points="167.8,236.5 165.1,240.7 170.5,240.7"/><polygon points="168.21,230.62 165.02,234.46 170.38,235.12"/><polygon points="170.33,225.11 166.18,227.88 171.14,230.03"/><polygon points="173.94,220.42 169.17,221.91 173.31,225.38"/><polygon points="178.72,216.95 173.73,217.02 176.71,221.52"/><polygon points="184.3,214.99 179.49,213.64 181.07,218.8"/><polygon points="190.2,214.68 185.97,212.02 186.03,217.42"/><polygon points="195.94,216.06 192.65,212.31 191.17,217.51"/><polygon points="201.06,219.02 198.96,214.49 196.07,219.05"/><polygon points="205.13,223.31 204.4,218.37 200.33,221.92"/><polygon points="207.81,228.57 208.52,223.63 203.61,225.88"/><polygon points="208.89,234.39 210.97,229.85 205.63,230.61"/><polygon points="208.8,240.3 211.5,236.1 206.1,236.1"/></g><path d="M272,362.3 H299" fill="none" stroke="#727272" stroke-width="9.6"/><path d="M272,362.3 H299" fill="none" stroke="#3f3e42" stroke-width="6.4"/><g fill="#008000"><polygon points="276.1,362.3 271.9,359.6 271.9,365"/><polygon points="282,362.3 277.8,359.6 277.8,365"/><polygon points="287.9,362.3 283.7,359.6 283.7,365"/><polygon points="293.8,362.3 289.6,359.6 289.6,365"/><polygon points="299.7,362.3 295.5,359.6 295.5,365"/></g><path d="M325.5,362.3 H446.3 A16,16 0 0 0 462.3,346.3 V225.1 A22,22 0 0 1 484.3,203.1 H488" fill="none" stroke="#727272" stroke-width="9.6"/><path d="M325.5,362.3 H446.3 A16,16 0 0 0 462.3,346.3 V225.1 A22,22 0 0 1 484.3,203.1 H488" fill="none" stroke="#3f3e42" stroke-width="6.4"/><g fill="#008000"><polygon points="329.6,362.3 325.4,359.6 325.4,365"/><polygon points="335.5,362.3 331.3,359.6 331.3,365"/><polygon points="341.4,362.3 337.2,359.6 337.2,365"/><polygon points="347.3,362.3 343.1,359.6 343.1,365"/><polygon points="353.2,362.3 349,359.6 349,365"/><polygon points="359.1,362.3 354.9,359.6 354.9,365"/><polygon points="365,362.3 360.8,359.6 360.8,365"/><polygon points="370.9,362.3 366.7,359.6 366.7,365"/><polygon points="376.8,362.3 372.6,359.6 372.6,365"/><polygon points="382.7,362.3 378.5,359.6 378.5,365"/><polygon points="388.6,362.3 384.4,359.6 384.4,365"/><polygon points="394.5,362.3 390.3,359.6 390.3,365"/><polygon points="400.4,362.3 396.2,359.6 396.2,365"/><polygon points="406.3,362.3 402.1,359.6 402.1,365"/><polygon points="412.2,362.3 408,359.6 408,365"/><polygon points="418.1,362.3 413.9,359.6 413.9,365"/><polygon points="424,362.3 419.8,359.6 419.8,365"/><polygon points="429.9,362.3 425.7,359.6 425.7,365"/><polygon points="435.8,362.3 431.6,359.6 431.6,365"/><polygon points="441.7,362.3 437.5,359.6 437.5,365"/><polygon points="447.6,362.3 443.4,359.6 443.4,365"/><polygon points="453.31,360.84 448.47,359.59 450.17,364.72"/><polygon points="458.08,357.33 453.12,357.91 456.54,362.08"/><polygon points="461.26,352.35 456.84,354.67 461.55,357.33"/><polygon points="462.44,346.55 459.15,350.31 464.5,351.09"/><polygon points="462.3,340.63 459.6,344.83 465,344.83"/><polygon points="462.3,334.73 459.6,338.93 465,338.93"/><polygon points="462.3,328.83 459.6,333.03 465,333.03"/><polygon points="462.3,322.93 459.6,327.13 465,327.13"/><polygon points="462.3,317.03 459.6,321.23 465,321.23"/><polygon points="462.3,311.13 459.6,315.33 465,315.33"/><polygon points="462.3,305.23 459.6,309.43 465,309.43"/><polygon points="462.3,299.33 459.6,303.53 465,303.53"/><polygon points="462.3,293.43 459.6,297.63 465,297.63"/><polygon points="462.3,287.53 459.6,291.73 465,291.73"/><polygon points="462.3,281.63 459.6,285.83 465,285.83"/><polygon points="462.3,275.73 459.6,279.93 465,279.93"/><polygon points="462.3,269.83 459.6,274.03 465,274.03"/><polygon points="462.3,263.93 459.6,268.13 465,268.13"/><polygon points="462.3,258.03 459.6,262.23 465,262.23"/><polygon points="462.3,252.13 459.6,256.33 465,256.33"/><polygon points="462.3,246.23 459.6,250.43 465,250.43"/><polygon points="462.3,240.33 459.6,244.53 465,244.53"/><polygon points="462.3,234.43 459.6,238.63 465,238.63"/><polygon points="462.3,228.53 459.6,232.73 465,232.73"/><polygon points="462.34,222.63 459.57,226.79 464.97,226.88"/><polygon points="463.78,216.9 460.01,220.17 465.19,221.69"/><polygon points="466.68,211.76 462.18,213.91 466.77,216.75"/><polygon points="470.85,207.57 465.93,208.45 469.61,212.4"/><polygon points="475.98,204.63 471,204.18 473.5,208.97"/><polygon points="481.7,203.15 477.02,201.4 478.16,206.68"/><polygon points="487.61,203.1 483.41,200.4 483.41,205.8"/></g><rect x="195" y="242" width="75" height="134" fill="url(#tg)"/><path d="M298,243 V237.5 Q298,232.5 303,232.5 H320.8 Q325.8,232.5 325.8,237.5 V243 Z" fill="#29292b" stroke="#4a4b4e" stroke-width="0.9"/><path d="M306,235 L311.9,241 L317.8,235" fill="none" stroke="#3a3c40" stroke-width="0.8"/><rect x="298.2" y="243" width="27.4" height="33" fill="#121314" stroke="#2e2f31" stroke-width="0.7"/><rect x="300.5" y="243" width="0.9" height="32" fill="#232427"/><rect x="303.7" y="243" width="0.9" height="32" fill="#232427"/><rect x="306.9" y="243" width="0.9" height="32" fill="#232427"/><rect x="310.1" y="243" width="0.9" height="32" fill="#232427"/><rect x="313.3" y="243" width="0.9" height="32" fill="#232427"/><rect x="316.5" y="243" width="0.9" height="32" fill="#232427"/><rect x="319.7" y="243" width="0.9" height="32" fill="#232427"/><rect x="322.9" y="243" width="0.9" height="32" fill="#232427"/><rect x="300" y="275.2" width="23.6" height="3.6" fill="#4e5054"/><rect x="305" y="278.8" width="14" height="11.8" fill="#4a4c50"/><rect x="305.8" y="279" width="3" height="11.5" fill="#a4a8ac"/><rect x="313" y="279" width="3.6" height="11.5" fill="#9a9ea2"/><polygon points="300,290.5 304,292.5 320,292.5 324,290.5 322.5,301.5 301.5,301.5" fill="#55585d"/><rect x="303" y="293" width="18" height="8" fill="#6a6d72"/><rect x="302" y="300" width="20.4" height="56" fill="url(#pg)"/><rect x="301.3" y="355" width="22" height="14.5" rx="2" fill="#151617"/><rect x="498.9" y="185.3" width="21.4" height="219.4" fill="url(#mgb)"/><rect x="497.7" y="184.5" width="23.4" height="2.5" rx="1.2" fill="url(#fg)"/><rect x="497.7" y="403.5" width="23.4" height="2.4" rx="1" fill="#3a5260"/><rect x="496.1" y="189" width="21.4" height="219.4" fill="url(#mgb)"/><rect x="494.9" y="188.2" width="23.4" height="2.5" rx="1.2" fill="url(#fg)"/><rect x="494.9" y="407.2" width="23.4" height="2.4" rx="1" fill="#3a5260"/><rect x="493.2" y="192.6" width="21.4" height="219.4" fill="url(#mg)"/><rect x="491.9" y="192.3" width="23.6" height="2.6" rx="1.2" fill="url(#fg)"/><rect x="491.9" y="410.2" width="23.6" height="2.6" rx="1" fill="#5f7480"/><rect x="489" y="198" width="5" height="9.5" fill="#9aa4ac"/><rect x="489" y="399.5" width="5" height="9.5" fill="#8a949c"/><rect x="499.6" y="411" width="8.6" height="7" fill="#8a949c"/><rect x="159.8" y="395.6" width="15.6" height="15.6" rx="2.5" fill="url(#vg)"/><polygon points="163,402 168,405 163,408.5" fill="#8a8c90"/><polygon points="172.5,402 167.5,405 172.5,408.5" fill="#8a8c90"/><rect x="167" y="398" width="1.6" height="5" fill="#9a9ca2"/><rect x="840.6" y="288.5" width="10" height="17.5" fill="#b4b8c4"/><rect x="842" y="289" width="6" height="16.5" fill="#bcc0cc"/><rect x="850.4" y="292.6" width="3.8" height="9.4" fill="#a9adb8"/><polygon points="28,152 30.5,152 30.5,148.2 37.8,155.8 30.5,163.3 30.5,159.5 28,159.5" fill="#8c8c8c"/><polygon points="959,293 963,293 963,289.5 969.5,297.3 963,305 963,301.5 959,301.5" fill="#8c8c8c"/><polygon points="40,458 40,460.5 36.6,460.5 44,468 51.4,460.5 48,460.5 48,458" fill="#8c8c8c"/><rect x="40.6" y="150.3" width="2.8" height="11" rx="1.2" fill="#f6f6f6"/><rect x="85.8" y="150.1" width="5" height="10.8" rx="1.2" fill="#f6f6f6"/><rect x="203.4" y="238.7" width="11" height="3" rx="1" fill="#f4f4f4"/><rect x="226.9" y="238.7" width="11" height="3" rx="1" fill="#f4f4f4"/><rect x="250.6" y="238.7" width="11" height="3" rx="1" fill="#f4f4f4"/><rect x="270.6" y="356.8" width="2.8" height="11" rx="1.2" fill="#f6f6f6"/><rect x="297.6" y="356.8" width="2.8" height="11" rx="1.2" fill="#f6f6f6"/><rect x="324.1" y="356.8" width="2.8" height="11" rx="1.2" fill="#f6f6f6"/><rect x="386.2" y="356.9" width="5" height="10.8" rx="1.2" fill="#f6f6f6"/><rect x="486.5" y="196.2" width="3" height="13" rx="1.2" fill="#f6f6f6"/><rect x="486.5" y="397.5" width="3" height="13" rx="1.2" fill="#f6f6f6"/><rect x="498.3" y="418.2" width="11" height="3.2" rx="1" fill="#f4f4f4"/><rect x="580.8" y="433.6" width="5" height="10.8" rx="1.2" fill="#f6f6f6"/><rect x="680.8" y="433.6" width="5" height="10.8" rx="1.2" fill="#f6f6f6"/><rect x="840" y="238.8" width="11" height="5" rx="1" fill="#f4f4f4"/><rect x="840" y="350.6" width="11" height="5" rx="1" fill="#f4f4f4"/><rect x="840" y="286.2" width="11" height="2.8" rx="1" fill="#f4f4f4"/><rect x="840" y="306.1" width="11" height="2.8" rx="1" fill="#f4f4f4"/><rect x="853.9" y="291.9" width="3" height="11" rx="1.2" fill="#f6f6f6"/><rect x="904.8" y="291.9" width="5" height="10.8" rx="1.2" fill="#f6f6f6"/><rect x="952.2" y="291.8" width="2.8" height="11" rx="1.2" fill="#f6f6f6"/><rect x="156.3" y="398.1" width="2.8" height="11" rx="1.2" fill="#f6f6f6"/><rect x="176.5" y="398.1" width="2.8" height="11" rx="1.2" fill="#f6f6f6"/><rect x="162.2" y="391.9" width="11" height="3" rx="1" fill="#f4f4f4"/><rect x="85.8" y="398.2" width="5" height="10.8" rx="1.2" fill="#f6f6f6"/><rect x="38.5" y="450.75" width="11" height="3.5" rx="1" fill="#f4f4f4"/><rect x="44.55" y="167.95" width="87.5" height="87.1" rx="6.5" fill="#474747" stroke="#5c5c5c" stroke-width="1.5"/><path d="M60.02,222.64 A30.4,30.4 0 0 1 99.84,183.37" fill="none" stroke="#2f6a2f" stroke-width="1.3"/><path d="M99.84,183.37 A30.4,30.4 0 0 1 116.58,222.64" fill="none" stroke="#7d2a2a" stroke-width="1.3"/><path d="M62.25,221.76 A28,28 0 0 1 60.3,211.69 L71.8,211.61 A16.5,16.5 0 0 0 72.95,217.55 Z" fill="#22a822"/><circle cx="88.3" cy="211.5" r="5.5" fill="#000"/><line x1="99.8" y1="211.42" x2="60.3" y2="211.69" stroke="#0a0a0a" stroke-width="2.6"/><line x1="99.8" y1="211.42" x2="60.3" y2="211.69" stroke="#f4f4f4" stroke-width="1.2"/><text x="55.9" y="228.7" text-anchor="middle" font-size="5.6" fill="#949494">0</text><text x="104.3" y="179.7" text-anchor="middle" font-size="5.6" fill="#949494">3K</text><text x="122.3" y="228.7" text-anchor="middle" font-size="5.6" fill="#949494">5K</text><text x="88.3" y="237.3" text-anchor="middle" font-size="10.2" font-weight="bold" fill="#f0f0f0">473.2 l/h</text><text x="88.3" y="249.1" text-anchor="middle" font-size="7.4" fill="#a2a2a2">Inlet water flow</text><rect x="44.55" y="303.55" width="87.5" height="87.1" rx="6.5" fill="#474747" stroke="#5c5c5c" stroke-width="1.5"/><path d="M60.02,358.24 A30.4,30.4 0 0 1 113.43,329.99" fill="none" stroke="#2f6a2f" stroke-width="1.3"/><path d="M113.43,329.99 A30.4,30.4 0 0 1 116.58,358.24" fill="none" stroke="#8b6a2a" stroke-width="1.3"/><path d="M62.25,357.36 A28,28 0 0 1 60.59,351.15 L71.97,349.48 A16.5,16.5 0 0 0 72.95,353.15 Z" fill="#22a822"/><circle cx="88.3" cy="347.1" r="5.5" fill="#000"/><line x1="99.68" y1="345.44" x2="60.59" y2="351.15" stroke="#0a0a0a" stroke-width="2.6"/><line x1="99.68" y1="345.44" x2="60.59" y2="351.15" stroke="#f4f4f4" stroke-width="1.2"/><text x="56.3" y="364.3" text-anchor="middle" font-size="5.6" fill="#949494">0</text><text x="122.3" y="328.3" text-anchor="middle" font-size="5.6" fill="#949494">1500</text><text x="122.7" y="364.8" text-anchor="middle" font-size="5.6" fill="#949494">2K</text><text x="88.3" y="372.9" text-anchor="middle" font-size="10.2" font-weight="bold" fill="#f0f0f0">118.3 l/h</text><text x="88.3" y="384.7" text-anchor="middle" font-size="7.4" fill="#a2a2a2">Concentrate to drain</text><rect x="344.95" y="262.55" width="87.5" height="87.1" rx="6.5" fill="#474747" stroke="#5c5c5c" stroke-width="1.5"/><path d="M360.42,317.24 A30.4,30.4 0 0 1 388.7,275.7" fill="none" stroke="#8b6a2a" stroke-width="1.3"/><path d="M388.7,275.7 A30.4,30.4 0 0 1 410.05,284.45" fill="none" stroke="#2f6a2f" stroke-width="1.3"/><path d="M410.05,284.45 A30.4,30.4 0 0 1 416.66,294.17" fill="none" stroke="#8b6a2a" stroke-width="1.3"/><path d="M416.66,294.17 A30.4,30.4 0 0 1 416.98,317.24" fill="none" stroke="#7d2a2a" stroke-width="1.3"/><path d="M362.65,316.36 A28,28 0 0 1 394.65,278.74 L392.21,289.98 A16.5,16.5 0 0 0 373.35,312.15 Z" fill="#22a822"/><circle cx="388.7" cy="306.1" r="5.5" fill="#000"/><line x1="386.26" y1="317.34" x2="394.65" y2="278.74" stroke="#0a0a0a" stroke-width="2.6"/><line x1="386.26" y1="317.34" x2="394.65" y2="278.74" stroke="#f4f4f4" stroke-width="1.2"/><text x="356.9" y="323.6" text-anchor="middle" font-size="5.6" fill="#949494">0</text><text x="392.2" y="272.3" text-anchor="middle" font-size="5.6" fill="#949494">10</text><text x="415.6" y="282" text-anchor="middle" font-size="5.6" fill="#949494">14</text><text x="422.6" y="292.5" text-anchor="middle" font-size="5.6" fill="#949494">16</text><text x="422.6" y="323.6" text-anchor="middle" font-size="5.6" fill="#949494">20</text><text x="388.7" y="331.9" text-anchor="middle" font-size="10.2" font-weight="bold" fill="#f0f0f0">11.1 bar</text><text x="388.7" y="343.7" text-anchor="middle" font-size="7.4" fill="#a2a2a2">RO pressure 1</text><rect x="539.55" y="197.55" width="87.5" height="87.1" rx="6.5" fill="#474747" stroke="#5c5c5c" stroke-width="1.5"/><path d="M555.02,252.24 A30.4,30.4 0 0 1 583.3,210.7" fill="none" stroke="#7d2a2a" stroke-width="1.3"/><path d="M583.3,210.7 A30.4,30.4 0 0 1 600.06,215.74" fill="none" stroke="#8b6a2a" stroke-width="1.3"/><path d="M600.06,215.74 A30.4,30.4 0 0 1 611.58,252.24" fill="none" stroke="#2f6a2f" stroke-width="1.3"/><path d="M557.25,251.36 A28,28 0 0 1 606.44,225.34 L596.94,231.81 A16.5,16.5 0 0 0 567.95,247.15 Z" fill="#22a822"/><circle cx="583.3" cy="241.1" r="5.5" fill="#000"/><line x1="573.79" y1="247.57" x2="606.44" y2="225.34" stroke="#0a0a0a" stroke-width="2.6"/><line x1="573.79" y1="247.57" x2="606.44" y2="225.34" stroke="#f4f4f4" stroke-width="1.2"/><text x="550.9" y="258.1" text-anchor="middle" font-size="5.6" fill="#949494">0</text><text x="586" y="207.3" text-anchor="middle" font-size="5.6" fill="#949494">50</text><text x="604.4" y="212.8" text-anchor="middle" font-size="5.6" fill="#949494">65</text><text x="618.3" y="258.1" text-anchor="middle" font-size="5.6" fill="#949494">100</text><text x="583.3" y="266.9" text-anchor="middle" font-size="10.2" font-weight="bold" fill="#f0f0f0">75 %</text><text x="583.3" y="278.7" text-anchor="middle" font-size="7.4" fill="#a2a2a2">Yield</text><rect x="539.55" y="339.15" width="87.5" height="87.1" rx="6.5" fill="#474747" stroke="#5c5c5c" stroke-width="1.5"/><path d="M555.02,393.84 A30.4,30.4 0 0 1 555.34,370.77" fill="none" stroke="#8b6a2a" stroke-width="1.3"/><path d="M555.34,370.77 A30.4,30.4 0 0 1 601.03,358.01" fill="none" stroke="#2f6a2f" stroke-width="1.3"/><path d="M601.03,358.01 A30.4,30.4 0 0 1 609.08,366.58" fill="none" stroke="#8b6a2a" stroke-width="1.3"/><path d="M609.08,366.58 A30.4,30.4 0 0 1 611.58,393.84" fill="none" stroke="#7d2a2a" stroke-width="1.3"/><path d="M557.25,392.96 A28,28 0 0 1 578.74,355.07 L580.61,366.42 A16.5,16.5 0 0 0 567.95,388.75 Z" fill="#22a822"/><circle cx="583.3" cy="382.7" r="5.5" fill="#000"/><line x1="585.17" y1="394.05" x2="578.74" y2="355.07" stroke="#0a0a0a" stroke-width="2.6"/><line x1="585.17" y1="394.05" x2="578.74" y2="355.07" stroke="#f4f4f4" stroke-width="1.2"/><text x="551" y="399.9" text-anchor="middle" font-size="5.6" fill="#949494">0</text><text x="549.9" y="369" text-anchor="middle" font-size="5.6" fill="#949494">10</text><text x="606" y="354.5" text-anchor="middle" font-size="5.6" fill="#949494">33</text><text x="614.7" y="364.3" text-anchor="middle" font-size="5.6" fill="#949494">38</text><text x="617.2" y="399.9" text-anchor="middle" font-size="5.6" fill="#949494">50</text><text x="583.3" y="408.5" text-anchor="middle" font-size="10.2" font-weight="bold" fill="#f0f0f0">22.9 °C</text><text x="583.3" y="420.3" text-anchor="middle" font-size="7.4" fill="#a2a2a2">Permeate temperature</text><rect x="639.55" y="339.15" width="87.5" height="87.1" rx="6.5" fill="#474747" stroke="#5c5c5c" stroke-width="1.5"/><path d="M655.02,393.84 A30.4,30.4 0 0 1 661.95,361.05" fill="none" stroke="#2f6a2f" stroke-width="1.3"/><path d="M661.95,361.05 A30.4,30.4 0 0 1 711.58,393.84" fill="none" stroke="#7d2a2a" stroke-width="1.3"/><path d="M657.25,392.96 A28,28 0 0 1 655.33,384.05 L666.82,383.5 A16.5,16.5 0 0 0 667.95,388.75 Z" fill="#22a822"/><circle cx="683.3" cy="382.7" r="5.5" fill="#000"/><line x1="694.79" y1="382.14" x2="655.33" y2="384.05" stroke="#0a0a0a" stroke-width="2.6"/><line x1="694.79" y1="382.14" x2="655.33" y2="384.05" stroke="#f4f4f4" stroke-width="1.2"/><text x="651" y="399.9" text-anchor="middle" font-size="5.6" fill="#949494">0</text><text x="656.4" y="358.5" text-anchor="middle" font-size="5.6" fill="#949494">15</text><text x="716.7" y="399.9" text-anchor="middle" font-size="5.6" fill="#949494">50</text><text x="683.3" y="408.5" text-anchor="middle" font-size="10.2" font-weight="bold" fill="#f0f0f0">4.2 µS/cm</text><text x="683.3" y="420.3" text-anchor="middle" font-size="7.4" fill="#a2a2a2">Permeate quality</text><rect x="745.5" y="197.55" width="87.5" height="87.1" rx="6.5" fill="#474747" stroke="#5c5c5c" stroke-width="1.5"/><path d="M760.97,252.24 A30.4,30.4 0 1 1 817.53,252.24" fill="none" stroke="#2f6a2f" stroke-width="1.3"/><path d="M763.2,251.36 A28,28 0 0 1 778.52,215.24 L782.93,225.86 A16.5,16.5 0 0 0 773.9,247.15 Z" fill="#22a822"/><circle cx="789.25" cy="241.1" r="5.5" fill="#000"/><line x1="793.66" y1="251.72" x2="778.52" y2="215.24" stroke="#0a0a0a" stroke-width="2.6"/><line x1="793.66" y1="251.72" x2="778.52" y2="215.24" stroke="#f4f4f4" stroke-width="1.2"/><text x="756.65" y="258.2" text-anchor="middle" font-size="5.6" fill="#949494">0</text><text x="822.85" y="258.2" text-anchor="middle" font-size="5.6" fill="#949494">3K</text><text x="789.25" y="266.9" text-anchor="middle" font-size="10.2" font-weight="bold" fill="#f0f0f0">1197 l/h</text><text x="789.25" y="278.7" text-anchor="middle" font-size="7.4" fill="#a2a2a2">Permeate back flow</text><rect x="863.55" y="197.55" width="87.5" height="87.1" rx="6.5" fill="#474747" stroke="#5c5c5c" stroke-width="1.5"/><path d="M879.02,252.24 A30.4,30.4 0 0 1 877.56,234.81" fill="none" stroke="#7d2a2a" stroke-width="1.3"/><path d="M877.56,234.81 A30.4,30.4 0 0 1 907.3,210.7" fill="none" stroke="#2f6a2f" stroke-width="1.3"/><path d="M907.3,210.7 A30.4,30.4 0 0 1 918.84,212.97" fill="none" stroke="#8b6a2a" stroke-width="1.3"/><path d="M918.84,212.97 A30.4,30.4 0 0 1 935.58,252.24" fill="none" stroke="#7d2a2a" stroke-width="1.3"/><path d="M881.25,251.36 A28,28 0 0 1 887.64,221.16 L895.71,229.35 A16.5,16.5 0 0 0 891.95,247.15 Z" fill="#22a822"/><circle cx="907.3" cy="241.1" r="5.5" fill="#000"/><line x1="915.37" y1="249.29" x2="887.64" y2="221.16" stroke="#0a0a0a" stroke-width="2.6"/><line x1="915.37" y1="249.29" x2="887.64" y2="221.16" stroke="#f4f4f4" stroke-width="1.2"/><text x="875.3" y="258.2" text-anchor="middle" font-size="5.6" fill="#949494">0</text><text x="871" y="234.8" text-anchor="middle" font-size="5.6" fill="#949494">1.5</text><text x="909" y="207.2" text-anchor="middle" font-size="5.6" fill="#949494">5</text><text x="921.3" y="210" text-anchor="middle" font-size="5.6" fill="#949494">6</text><text x="941.2" y="258.2" text-anchor="middle" font-size="5.6" fill="#949494">10</text><text x="907.3" y="266.9" text-anchor="middle" font-size="10.2" font-weight="bold" fill="#f0f0f0">3 bar</text><text x="907.3" y="278.7" text-anchor="middle" font-size="7.4" fill="#a2a2a2">Loop pressure</text><rect x="745.5" y="309.55" width="87.5" height="87.1" rx="6.5" fill="#474747" stroke="#5c5c5c" stroke-width="1.5"/><path d="M760.97,364.24 A30.4,30.4 0 0 1 758.85,352.68" fill="none" stroke="#8b6a2a" stroke-width="1.3"/><path d="M758.85,352.68 A30.4,30.4 0 1 1 817.53,364.24" fill="none" stroke="#2f6a2f" stroke-width="1.3"/><path d="M763.2,363.36 A28,28 0 0 1 768.91,333.85 L777.27,341.76 A16.5,16.5 0 0 0 773.9,359.15 Z" fill="#22a822"/><circle cx="789.25" cy="353.1" r="5.5" fill="#000"/><line x1="797.6" y1="361.01" x2="768.91" y2="333.85" stroke="#0a0a0a" stroke-width="2.6"/><line x1="797.6" y1="361.01" x2="768.91" y2="333.85" stroke="#f4f4f4" stroke-width="1.2"/><text x="756.65" y="371" text-anchor="middle" font-size="5.6" fill="#949494">0</text><text x="751.95" y="344.8" text-anchor="middle" font-size="5.6" fill="#949494">500</text><text x="822.85" y="371" text-anchor="middle" font-size="5.6" fill="#949494">5K</text><text x="789.25" y="378.9" text-anchor="middle" font-size="10.2" font-weight="bold" fill="#f0f0f0">1455.7 l/h</text><text x="789.25" y="390.7" text-anchor="middle" font-size="7.4" fill="#a2a2a2">Permeate production</text><rect x="863.55" y="309.35" width="87.5" height="87.1" rx="6.5" fill="#474747" stroke="#5c5c5c" stroke-width="1.5"/><path d="M879.02,364.04 A30.4,30.4 0 1 1 935.58,364.04" fill="none" stroke="#2f6a2f" stroke-width="1.3"/><path d="M881.25,363.16 A28,28 0 0 1 879.72,357.74 L891.05,355.75 A16.5,16.5 0 0 0 891.95,358.95 Z" fill="#22a822"/><circle cx="907.3" cy="352.9" r="5.5" fill="#000"/><line x1="918.63" y1="350.91" x2="879.72" y2="357.74" stroke="#0a0a0a" stroke-width="2.6"/><line x1="918.63" y1="350.91" x2="879.72" y2="357.74" stroke="#f4f4f4" stroke-width="1.2"/><text x="875.3" y="370.8" text-anchor="middle" font-size="5.6" fill="#949494">0</text><text x="941.2" y="370.8" text-anchor="middle" font-size="5.6" fill="#949494">5K</text><text x="907.3" y="378.7" text-anchor="middle" font-size="10.2" font-weight="bold" fill="#f0f0f0">258.7 l/h</text><text x="907.3" y="390.5" text-anchor="middle" font-size="7.4" fill="#a2a2a2">Permeate consumption</text>
</svg>
</body></html>
